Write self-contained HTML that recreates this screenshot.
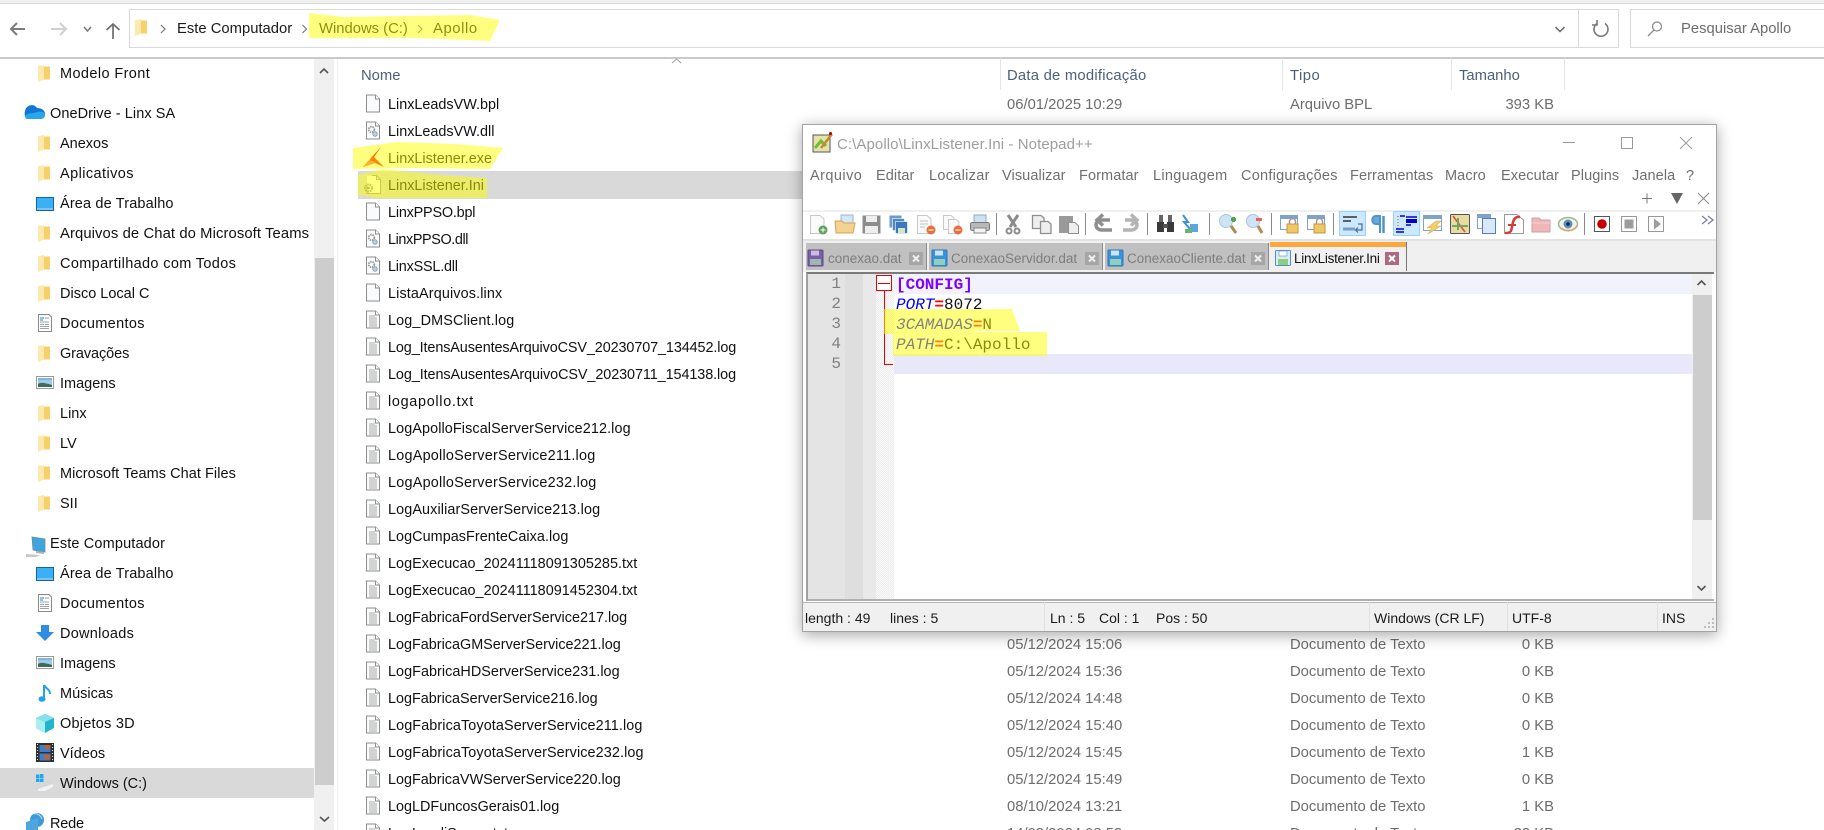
<!DOCTYPE html>
<html lang="pt"><head><meta charset="utf-8"><title>Apollo</title>
<style>
html,body{margin:0;padding:0;background:#fff;width:1824px;height:830px;overflow:hidden}
body{position:relative;font-family:"Liberation Sans",sans-serif;color:#111}
div,span{position:absolute;white-space:pre;box-sizing:border-box}
svg{position:absolute;left:0;top:0;overflow:visible}
#root{left:0;top:0;width:1824px;height:830px;overflow:hidden}
.t{line-height:20px;height:20px}
.s{left:60px;font-size:14.5px;line-height:20px}
.s2{left:50px;font-size:14.5px;line-height:20px}
.f{left:388px;font-size:14.4px;line-height:20px}
.d{left:1007px;font-size:14.8px;line-height:20px;color:#6d6d6d}
.y{left:1290px;font-size:14.8px;line-height:20px;color:#6d6d6d}
.z{right:270px;font-size:14.8px;line-height:20px;color:#6d6d6d}
.h{top:66px;font-size:14.8px;line-height:20px;color:#4c607a}
.a{top:19px;font-size:14.8px;line-height:20px;color:#1a1a1a}
.m{top:166px;font-size:14.5px;line-height:20px;color:#6f6f6f;letter-spacing:.1px}
.tb{top:243px;height:27px;background:#c0c0c0;border-right:1px solid #8c8c8c}
.tt{top:249px;font-size:13.5px;line-height:20px;color:#7d7d7d}
.c{left:896px;font:16px/20px "Liberation Mono",monospace}
.n{left:808px;width:33px;text-align:right;font:16px/20px "Liberation Mono",monospace;color:#808080}
.st{top:608px;font-size:14px;line-height:20px;color:#1a1a1a}
.v{top:602px;width:1px;height:29px;background:#e0e0e0}
.hl{left:0;top:0;width:1824px;height:830px}
</style></head><body>
<div id="root">

<div style="left:0;top:0;width:1824px;height:3px;background:#f0f0f0"></div>
<div style="left:0;top:3px;width:1824px;height:1px;background:#dadada"></div>
<div style="left:129px;top:9px;width:1490px;height:39px;border:1px solid #d9d9d9"></div>
<div style="left:1578px;top:9px;width:1px;height:39px;background:#d9d9d9"></div>
<div style="left:1630px;top:9px;width:194px;height:39px;border:1px solid #d9d9d9;border-right:0"></div>
<div style="left:0;top:57px;width:1824px;height:2px;background:#c9c9c9"></div>

<div class="a" style="left:177px">Este Computador</div>
<div class="a" style="left:319px">Windows (C:)</div>
<div class="a" style="left:433px;letter-spacing:.6px">Apollo</div>
<div class="a" style="left:1681px;color:#6d6d6d">Pesquisar Apollo</div>

<div style="left:314px;top:59px;width:20px;height:771px;background:#f0f0f0"></div>
<div style="left:315px;top:258px;width:19px;height:527px;background:#cdcdcd"></div>
<div style="left:337px;top:59px;width:1px;height:771px;background:#f2f2f2"></div>
<div style="left:0;top:768px;width:314px;height:30px;background:#d9d9d9"></div>
<div style="left:358px;top:171px;width:450px;height:28px;background:#d9d9d9"></div>

<div class="h" style="left:361px">Nome</div>
<div class="h" style="left:1007px;letter-spacing:.24px">Data de modificação</div>
<div class="h" style="left:1290px;letter-spacing:.5px">Tipo</div>
<div class="h" style="left:1459px">Tamanho</div>
<div style="left:1000px;top:58px;width:1px;height:32px;background:#e5e5e5"></div>
<div style="left:1282px;top:58px;width:1px;height:32px;background:#e5e5e5"></div>
<div style="left:1451px;top:58px;width:1px;height:32px;background:#e5e5e5"></div>
<div style="left:1564px;top:58px;width:1px;height:32px;background:#e5e5e5"></div>

<div class="s" style="top:64px;letter-spacing:.39px">Modelo Front</div>
<div class="s2" style="top:104px;letter-spacing:.06px">OneDrive - Linx SA</div>
<div class="s" style="top:134px">Anexos</div>
<div class="s" style="top:164px;letter-spacing:.42px">Aplicativos</div>
<div class="s" style="top:194px;letter-spacing:.15px">Área de Trabalho</div>
<div class="s" style="top:224px;font-size:14.8px;letter-spacing:.1px">Arquivos de Chat do Microsoft Teams</div>
<div class="s" style="top:254px;letter-spacing:.35px">Compartilhado com Todos</div>
<div class="s" style="top:284px">Disco Local C</div>
<div class="s" style="top:314px;letter-spacing:.35px">Documentos</div>
<div class="s" style="top:344px;letter-spacing:-.1px">Gravações</div>
<div class="s" style="top:374px">Imagens</div>
<div class="s" style="top:404px">Linx</div>
<div class="s" style="top:434px">LV</div>
<div class="s" style="top:464px;letter-spacing:.05px">Microsoft Teams Chat Files</div>
<div class="s" style="top:494px">SII</div>
<div class="s2" style="top:534px;letter-spacing:.15px">Este Computador</div>
<div class="s" style="top:564px;letter-spacing:.15px">Área de Trabalho</div>
<div class="s" style="top:594px;letter-spacing:.35px">Documentos</div>
<div class="s" style="top:624px;letter-spacing:.26px">Downloads</div>
<div class="s" style="top:654px">Imagens</div>
<div class="s" style="top:684px">Músicas</div>
<div class="s" style="top:714px;letter-spacing:.23px">Objetos 3D</div>
<div class="s" style="top:744px">Vídeos</div>
<div class="s" style="top:774px">Windows (C:)</div>
<div class="s2" style="top:814px;letter-spacing:-.2px">Rede</div>

<div class="f" style="top:95px">LinxLeadsVW.bpl</div>
<div class="f" style="top:122px">LinxLeadsVW.dll</div>
<div class="f" style="top:149px">LinxListener.exe</div>
<div class="f" style="top:176px">LinxListener.Ini</div>
<div class="f" style="top:203px;letter-spacing:-.19px">LinxPPSO.bpl</div>
<div class="f" style="top:230px;letter-spacing:-.39px">LinxPPSO.dll</div>
<div class="f" style="top:257px;letter-spacing:-.2px">LinxSSL.dll</div>
<div class="f" style="top:284px;letter-spacing:.13px">ListaArquivos.linx</div>
<div class="f" style="top:311px;letter-spacing:.14px">Log_DMSClient.log</div>
<div class="f" style="top:338px;letter-spacing:-.1px">Log_ItensAusentesArquivoCSV_20230707_134452.log</div>
<div class="f" style="top:365px;letter-spacing:-.08px">Log_ItensAusentesArquivoCSV_20230711_154138.log</div>
<div class="f" style="top:392px;letter-spacing:.7px">logapollo.txt</div>
<div class="f" style="top:419px;letter-spacing:.1px">LogApolloFiscalServerService212.log</div>
<div class="f" style="top:446px;letter-spacing:.24px">LogApolloServerService211.log</div>
<div class="f" style="top:473px;letter-spacing:.24px">LogApolloServerService232.log</div>
<div class="f" style="top:500px;letter-spacing:.11px">LogAuxiliarServerService213.log</div>
<div class="f" style="top:527px;letter-spacing:.05px">LogCumpasFrenteCaixa.log</div>
<div class="f" style="top:554px;letter-spacing:.03px">LogExecucao_20241118091305285.txt</div>
<div class="f" style="top:581px;letter-spacing:.03px">LogExecucao_20241118091452304.txt</div>
<div class="f" style="top:608px">LogFabricaFordServerService217.log</div>
<div class="f" style="top:635px">LogFabricaGMServerService221.log</div>
<div class="f" style="top:662px;letter-spacing:.04px">LogFabricaHDServerService231.log</div>
<div class="f" style="top:689px">LogFabricaServerService216.log</div>
<div class="f" style="top:716px;letter-spacing:.1px">LogFabricaToyotaServerService211.log</div>
<div class="f" style="top:743px;letter-spacing:.1px">LogFabricaToyotaServerService232.log</div>
<div class="f" style="top:770px">LogFabricaVWServerService220.log</div>
<div class="f" style="top:797px">LogLDFuncosGerais01.log</div>
<div class="f" style="top:824px">LogLoadiServer.txt</div>

<div class="d" style="top:95px">06/01/2025 10:29</div><div class="y" style="top:95px">Arquivo BPL</div><div class="z" style="top:95px">393 KB</div>
<div class="d" style="top:635px">05/12/2024 15:06</div><div class="y" style="top:635px">Documento de Texto</div><div class="z" style="top:635px">0 KB</div>
<div class="d" style="top:662px">05/12/2024 15:36</div><div class="y" style="top:662px">Documento de Texto</div><div class="z" style="top:662px">0 KB</div>
<div class="d" style="top:689px">05/12/2024 14:48</div><div class="y" style="top:689px">Documento de Texto</div><div class="z" style="top:689px">0 KB</div>
<div class="d" style="top:716px">05/12/2024 15:40</div><div class="y" style="top:716px">Documento de Texto</div><div class="z" style="top:716px">0 KB</div>
<div class="d" style="top:743px">05/12/2024 15:45</div><div class="y" style="top:743px">Documento de Texto</div><div class="z" style="top:743px">1 KB</div>
<div class="d" style="top:770px">05/12/2024 15:49</div><div class="y" style="top:770px">Documento de Texto</div><div class="z" style="top:770px">0 KB</div>
<div class="d" style="top:797px">08/10/2024 13:21</div><div class="y" style="top:797px">Documento de Texto</div><div class="z" style="top:797px">1 KB</div>
<div class="d" style="top:824px">14/03/2024 08:53</div><div class="y" style="top:824px">Documento de Texto</div><div class="z" style="top:824px">33 KB</div>

<svg width="1824" height="830">
<defs>
<g id="fo"><path d="M0 1L6 0V14.500L0 17Z" fill="#fce9ad"/><path d="M6 1.500H12V14.500H6Z" fill="#f6d16a"/></g>
<g id="b"><path d="M.5.5H9.500L13.500 4.500V17.500H.5Z" fill="#fafbfc" stroke="#8e8e8e"/><path d="M9.500.5V4.500H13.500" fill="#fff" stroke="#8e8e8e"/></g>
<g id="l"><use href="#b"/><path d="M3 5.500H9M3 7.500H11M3 9.500H11M3 11.500H11M3 13.500H11M3 15.500H11" stroke="#a8a8a8" fill="none"/></g>
<g id="g"><use href="#b"/><circle cx="5.500" cy="8" r="2.800" fill="none" stroke="#9a9a9a" stroke-width="1.800" stroke-dasharray="1.500 .8"/><circle cx="9" cy="12.500" r="2.200" fill="#b9d4ea" stroke="#8aa0b5"/></g>
<g id="dk"><rect x=".5" y=".5" width="17" height="13" fill="#1d9bf0" stroke="#12669f"/><rect x="1" y="1" width="16" height="10" fill="#3ab0f7"/><path d="M1 12H17" stroke="#d8eefc"/></g>
<g id="dc"><path d="M.5.5H11L13.500 3V17.500H.5Z" fill="#fff" stroke="#8a8a8a"/><path d="M2 4H6M2 6H5" stroke="#2a86d8"/><path d="M7 4H11M2 8H11M7 10.500H11M2 10.500H6M2 12.500H11M2 14.500H11" stroke="#9aa3ab"/></g>
<g id="im"><rect x=".5" y=".5" width="17" height="12" fill="#fff" stroke="#9a9a9a"/><rect x="2" y="2" width="14" height="9" fill="#9fcbea"/><path d="M2 8C5 6 9 7 16 9V11H2Z" fill="#3f6a58"/><path d="M2 3H16" stroke="#5d9fd2"/></g>
<g id="bk"><path d="M1 7.500H15M7 1.500L1 7.500L7 13.500" fill="none" stroke="currentColor" stroke-width="2"/></g>
</defs>

<!-- nav -->
<g color="#7b7b7b"><use href="#bk" x="10" y="21.500"/></g>
<path d="M66 29H51M60 23L66 29L60 35" fill="none" stroke="#d0d0d0" stroke-width="2"/>
<path d="M84 27L87.500 31L91 27" fill="none" stroke="#777" stroke-width="1.500"/>
<path d="M113 39V24M106.500 30L113 24L119.500 30" fill="none" stroke="#6e6e6e" stroke-width="1.700"/>
<use href="#fo" x="135" y="19"/>
<path d="M161 25L165 29L161 33M302.500 25L306.500 29L302.500 33M418 25L422 29L418 33" fill="none" stroke="#7a7a7a" stroke-width="1.200"/>
<path d="M1555.500 27L1560 31.500L1564.500 27" fill="none" stroke="#666" stroke-width="1.500"/>
<path d="M1605 23.500A7 7 0 1 1 1597 23.500M1597 20V25H1592" fill="none" stroke="#777" stroke-width="1.600"/>
<circle cx="1657" cy="26.500" r="4.500" fill="none" stroke="#888" stroke-width="1.200"/><path d="M1654 30L1648 36" stroke="#888" stroke-width="1.300"/>
<path d="M672 63L676.500 59L681 63" fill="none" stroke="#a0a0a0"/>
<path d="M320 73L324 69L328 73" fill="none" stroke="#555" stroke-width="1.600"/>
<path d="M320 817L324.500 821L329 817" fill="none" stroke="#555" stroke-width="1.600"/>

<!-- sidebar icons -->
<use href="#fo" x="38" y="65"/><use href="#fo" x="38" y="135"/><use href="#fo" x="38" y="165"/>
<use href="#dk" x="36" y="197"/><use href="#fo" x="38" y="225"/><use href="#fo" x="38" y="255"/><use href="#fo" x="38" y="285"/>
<use href="#dc" x="38" y="314"/><use href="#fo" x="38" y="345"/><use href="#im" x="36" y="376"/><use href="#fo" x="38" y="405"/>
<use href="#fo" x="38" y="435"/><use href="#fo" x="38" y="465"/><use href="#fo" x="38" y="495"/>
<use href="#dk" x="36" y="567"/><use href="#dc" x="38" y="594"/><use href="#im" x="36" y="656"/>
<path d="M25 111C26 105 34 103 37 108C41 108 45 110 45 114C45 117 43 119 40 119H28C25 119 24 114 25 111Z" fill="#0f78d4"/><path d="M25 116C29 112 33 114 37 112C41 111 45 112 45 115C45 118 43 119 40 119H28C26 119 25 118 25 116Z" fill="#28a8ea"/>
<path d="M32 537L45 539V552L33 550Z" fill="#3da5df" stroke="#75899a" stroke-width=".8"/><path d="M26 554L40 555L36 557H26Z" fill="#c6c9cc"/><path d="M36 551L44 552V554L36 553Z" fill="#a9b3bb"/>
<path d="M41 625H49V632H54L45 641L36 632H41Z" fill="#2d8de0"/>
<path d="M44 685L44 699" stroke="#1fa3ee" stroke-width="2"/><ellipse cx="42" cy="699" rx="3.500" ry="2.800" fill="#1fa3ee"/><path d="M44 685C46 689 50 689 50 694" fill="none" stroke="#1fa3ee" stroke-width="2"/>
<path d="M45 714L54 718V728L45 733L36 728V718Z" fill="#1fb6cc"/><path d="M36 718L45 722L54 718L45 714Z" fill="#86e1ea"/><path d="M36 718L45 722V733L36 728Z" fill="#a9eef2"/>
<rect x="36" y="743" width="18" height="19" fill="#2f2f2f"/><rect x="39.500" y="745" width="11" height="7" fill="#3f7fc8"/><rect x="39.500" y="753.500" width="11" height="7" fill="#3f7fc8"/><path d="M45 745h5v4h-5zM44 755h6v4h-6z" fill="#c75f2a"/><path d="M37.500 744v18M52.500 744v18" stroke="#ddd" stroke-dasharray="1 2"/>
<path d="M36 781H53V787L45 791H39L36 789Z" fill="#d4d8da"/><path d="M38 789L53 784V787L45 791H38Z" fill="#f0f2f3"/><path d="M36 778h3.500v-3.500h-3.500zM40 778h3.500v-4h-3.500zM36 782h3.500v-3.500h-3.500zM40 782h3.500v-3.500h-3.500z" fill="#1fa7ee"/>
<circle cx="37" cy="820" r="7" fill="#3f9bd7"/><path d="M26 822L38 818V830H26Z" fill="#4ea6de"/><path d="M34 814C38 813 41 816 42 819" stroke="#bfe0f5" fill="none"/>

<!-- file icons -->
<use href="#b" x="366" y="94.500"/><use href="#g" x="366" y="121.500"/>
<path d="M371.500 175.500H376.500L380.500 179.500V193.500H367V186" fill="#fafbfc" stroke="#999"/><path d="M376.500 175.500V179.500H380.500" fill="none" stroke="#999"/><path d="M367 175.500H372V186H367Z" fill="#fafbfc" stroke="#999" stroke-width="0"/><circle cx="368.500" cy="188" r="3.500" fill="none" stroke="#8a8a8a" stroke-width="2" stroke-dasharray="1.500 1"/><circle cx="368.500" cy="188" r="1.200" fill="#777"/>
<use href="#b" x="366" y="202.500"/><use href="#g" x="366" y="229.500"/><use href="#g" x="366" y="256.500"/><use href="#b" x="366" y="283.500"/>
<use href="#l" x="366" y="310.500"/><use href="#l" x="366" y="337.500"/><use href="#l" x="366" y="364.500"/><use href="#l" x="366" y="391.500"/><use href="#l" x="366" y="418.500"/>
<use href="#l" x="366" y="445.500"/><use href="#l" x="366" y="472.500"/><use href="#l" x="366" y="499.500"/><use href="#l" x="366" y="526.500"/><use href="#l" x="366" y="553.500"/>
<use href="#l" x="366" y="580.500"/><use href="#l" x="366" y="607.500"/><use href="#l" x="366" y="634.500"/><use href="#l" x="366" y="661.500"/><use href="#l" x="366" y="688.500"/>
<use href="#l" x="366" y="715.500"/><use href="#l" x="366" y="742.500"/><use href="#l" x="366" y="769.500"/><use href="#l" x="366" y="796.500"/><use href="#l" x="366" y="823.500"/>
</svg>

<!-- explorer highlights -->
<svg class="hl" width="1824" height="830" style="z-index:1">
<path d="M309 13L345 17L470 15L500 20L490 41L420 38L309 38Z" fill="rgba(255,255,0,.5)"/>
<path d="M353 148L397 142L455 144L503 148L490 169L410 168L353 169Z" fill="rgba(255,255,0,.5)"/>
<path d="M358 175L383 169L440 175L487 178V198H400L376 198L358 195Z" fill="rgba(255,255,0,.5)"/>
<path d="M381 147L374 157L384 167L375 163L363 167L371 158Z" fill="#f68a0c"/>
<path d="M381 147L374 157L371 158Z" fill="#fb6a00"/>
<path d="M370 160L384 167L375 163L363 167Z" fill="#fdb22e"/>
</svg>

<!-- NOTEPAD++ -->
<div style="left:802px;top:124px;width:915px;height:508px;background:#fff;border:1px solid #a3a3a3;box-shadow:0 3px 14px rgba(0,0,0,.35);z-index:2"></div>
<div style="left:0;top:0;width:1824px;height:830px;z-index:3">
<div style="left:803px;top:210px;width:913px;height:2px;background:#f0f0f0"></div>
<div style="left:803px;top:239px;width:913px;height:2px;background:#e2e2e2"></div>
<div style="left:803px;top:241px;width:913px;height:31px;background:#f0f0f0"></div>

<div class="t" style="left:837px;top:135px;font-size:15px;color:#9d9d9d;letter-spacing:.08px">C:\Apollo\LinxListener.Ini - Notepad++</div>
<div class="m" style="left:810px;letter-spacing:.45px">Arquivo</div><div class="m" style="left:876px">Editar</div><div class="m" style="left:929px;letter-spacing:.3px">Localizar</div>
<div class="m" style="left:1002px">Visualizar</div><div class="m" style="left:1079px">Formatar</div><div class="m" style="left:1153px;letter-spacing:.3px">Linguagem</div>
<div class="m" style="left:1241px;letter-spacing:.25px">Configurações</div><div class="m" style="left:1350px">Ferramentas</div><div class="m" style="left:1445px">Macro</div>
<div class="m" style="left:1501px">Executar</div><div class="m" style="left:1571px">Plugins</div><div class="m" style="left:1632px">Janela</div><div class="m" style="left:1686px">?</div>

<div style="left:806px;top:243px;width:121px;height:27px;background:#c0c0c0;border-right:1px solid #8c8c8c"></div>
<div class="tb" style="left:929px;width:174px"></div>
<div class="tb" style="left:1105px;width:164px"></div>
<div style="left:1270px;top:242px;width:137px;height:29px;background:#f0f0f0;border-right:1px solid #777"></div>
<div style="left:1270px;top:242px;width:136px;height:5px;background:#fca83c"></div>
<div class="tt" style="left:828px">conexao.dat</div>
<div class="tt" style="left:951px">ConexaoServidor.dat</div>
<div class="tt" style="left:1127px">ConexaoCliente.dat</div>
<div class="tt" style="left:1294px;color:#111;letter-spacing:-.28px">LinxListener.Ini</div>

<div style="left:806px;top:272px;width:908px;height:329px;background:#fff;border-top:2px solid #7a7a7a;border-left:2px solid #a0a0a0;border-bottom:2px solid #b0b0b0"></div>
<div style="left:808px;top:274px;width:37px;height:325px;background:#e4e4e4"></div>
<div style="left:845px;top:274px;width:18px;height:325px;background:#dedede"></div>
<div style="left:863px;top:274px;width:13px;height:325px;background:#e9e9e9"></div>
<div style="left:876px;top:274px;width:18px;height:325px;background:repeating-conic-gradient(#ececec 0 25%,#fbfbfb 0 50%) 0 0/2px 2px"></div>
<div style="left:894px;top:274px;width:798px;height:20px;background:#f0f3fb"></div>
<div style="left:894px;top:354px;width:798px;height:20px;background:#e8e8fa"></div>
<div style="left:1692px;top:274px;width:20px;height:325px;background:#f0f0f0"></div>
<div style="left:1693px;top:295px;width:19px;height:225px;background:#cdcdcd"></div>

<div class="n" style="top:274px">1</div><div class="n" style="top:294px">2</div><div class="n" style="top:314px">3</div><div class="n" style="top:334px">4</div><div class="n" style="top:354px">5</div>
<div class="c" style="top:275px;color:#8000ff;font-weight:bold">[CONFIG]</div>
<div class="c" style="top:295px"><i style="color:#0000ff">PORT</i><b style="color:#f00">=</b>8072</div>
<div class="c" style="top:315px"><i style="color:#0000ff">3CAMADAS</i><b style="color:#f00">=</b>N</div>
<div class="c" style="top:335px"><i style="color:#0000ff">PATH</i><b style="color:#f00">=</b>C:\Apollo</div>

<div style="left:803px;top:602px;width:913px;height:29px;background:#f0f0f0;border-top:1px solid #b5b5b5"></div>
<div class="v" style="left:1044px"></div><div class="v" style="left:1369px"></div><div class="v" style="left:1507px"></div><div class="v" style="left:1657px"></div>
<div class="st" style="left:805px">length : 49</div><div class="st" style="left:890px">lines : 5</div>
<div class="st" style="left:1050px">Ln : 5</div><div class="st" style="left:1099px">Col : 1</div><div class="st" style="left:1156px">Pos : 50</div>
<div class="st" style="left:1374px">Windows (CR LF)</div><div class="st" style="left:1512px">UTF-8</div><div class="st" style="left:1662px">INS</div>

<svg width="1824" height="830">
<!-- title icon -->
<rect x="813" y="135" width="17" height="17" fill="#e6e2b0" stroke="#555"/><path d="M815 148L821 141L826 146" fill="none" stroke="#6fbf2f" stroke-width="3"/><path d="M821 148L832 134" stroke="#c8862a" stroke-width="2.500"/><circle cx="830.500" cy="133.500" r="1.500" fill="#a00"/>
<!-- window controls -->
<path d="M1563 142.500H1575" stroke="#9a9a9a"/><rect x="1621.500" y="137.500" width="11" height="11" fill="none" stroke="#9a9a9a"/><path d="M1680 137L1692 149M1692 137L1680 149" stroke="#9a9a9a"/>
<path d="M1642 198.500H1652M1647 193.500V203.500" stroke="#777"/><path d="M1671 193H1683L1677 204Z" fill="#666"/><path d="M1698 193L1709 204M1709 193L1698 204" stroke="#888"/>
<path d="M1702 216L1707 220L1702 224M1708 216L1713 220L1708 224" fill="none" stroke="#7b7bb0" stroke-width="1.300"/>
<!-- toolbar -->
<path d="M996.500 213V235M1085.500 213V235M1147.500 213V235M1209.500 213V235M1271.500 213V235M1333.500 213V235M1584.500 213V235" stroke="#8a8a8a"/>
<path d="M810.500 215.500H820L824 219V233.500H810.500Z" fill="#fafafa" stroke="#c8c8c8"/><circle cx="823" cy="230" r="4.500" fill="#5f9f5f"/><path d="M823 227.500V232.500M820.500 230H825.500" stroke="#fff"/>
<path d="M841 215H853V227H841Z" fill="#d7e6f7" stroke="#9ab7d8"/><path d="M835 221H842L844 223H855L853 233H836Z" fill="#f4d28f" stroke="#d1a35a"/>
<rect x="862.500" y="215.500" width="18" height="18" fill="#8c8c8c"/><rect x="866" y="216" width="11" height="6" fill="#eee"/><rect x="865" y="226" width="13" height="7" fill="#eee"/>
<rect x="889.500" y="215.500" width="12" height="12" fill="#6e9bc8"/><rect x="892.500" y="218.500" width="12" height="12" fill="#4f87c1" stroke="#fff" stroke-width=".6"/><rect x="895.500" y="221.500" width="12" height="12" fill="#3c79bc" stroke="#fff" stroke-width=".6"/><rect x="898" y="228" width="7" height="5" fill="#d2e8c0"/>
<path d="M917.500 215.500H927L931 219V233.500H917.500Z" fill="#fafafa" stroke="#c8c8c8"/><path d="M920 221H928M920 224H928M920 227H925" stroke="#c2c2c2"/><circle cx="931" cy="230" r="4.500" fill="#e4713d"/><path d="M928.500 230H933.500" stroke="#fff"/>
<path d="M943.500 215.500H951L954 218V229.500H943.500Z" fill="#fafafa" stroke="#c8c8c8"/><path d="M948.500 219.500H956L959 222V233.500H948.500Z" fill="#fafafa" stroke="#c8c8c8"/><circle cx="958" cy="230" r="4.500" fill="#e4713d"/><path d="M955.500 230H960.500" stroke="#fff"/>
<rect x="974" y="215" width="12" height="8" fill="#cfe0f2" stroke="#8fa8c4"/><rect x="970.500" y="222.500" width="19" height="8" rx="2" fill="#b8b8b8" stroke="#777"/><rect x="974" y="228" width="12" height="5" fill="#f2f2f2" stroke="#888"/>
<path d="M1018 215L1010 227M1008 215L1016 227" stroke="#8c8c8c" stroke-width="3"/><circle cx="1009" cy="231" r="2.500" fill="none" stroke="#8c8c8c" stroke-width="2"/><circle cx="1017" cy="231" r="2.500" fill="none" stroke="#8c8c8c" stroke-width="2"/>
<path d="M1032.500 215.500H1041L1044 218V228.500H1032.500Z" fill="#eee" stroke="#8e8e8e" stroke-width="1.300"/><path d="M1040.500 221.500H1048L1051 224V233.500H1040.500Z" fill="#eee" stroke="#8e8e8e" stroke-width="1.300"/>
<path d="M1059 216H1073V233H1059Z" fill="#9a9a9a"/><path d="M1068.500 222.500H1075L1078.500 226V233.500H1068.500Z" fill="#eee" stroke="#8e8e8e"/>
<path d="M1112 230H1102C1094 230 1094 220 1102 220H1110M1103 214.500L1097 220L1103 225.500" fill="none" stroke="#8f8f8f" stroke-width="3.500"/>
<path d="M1123 230H1131C1139 230 1139 220 1131 220H1125M1131 214.500L1137 220L1131 225.500" fill="none" stroke="#b3b3b3" stroke-width="3.500"/>
<rect x="1157" y="222" width="7" height="10" fill="#3a3a3a"/><rect x="1167" y="222" width="7" height="10" fill="#3a3a3a"/><rect x="1163" y="224" width="5" height="4" fill="#555"/><rect x="1159" y="215" width="4" height="7" fill="#666"/><rect x="1168" y="215" width="4" height="7" fill="#666"/>
<path d="M1183 215L1188 222H1184L1190 229" fill="none" stroke="#3e8fd6" stroke-width="2"/><path d="M1190 224L1198 224L1198 232H1190Z" fill="#5da6e3"/><path d="M1185 229H1192V233H1185Z" fill="#6bb56b"/>
<circle cx="1226" cy="221" r="6.500" fill="#cfe3f5" stroke="#a9c6df"/><path d="M1231 226L1236 233" stroke="#b08a50" stroke-width="3"/><path d="M1231 219.500H1236M1233.500 217V222" stroke="#4fa34f" stroke-width="3"/>
<circle cx="1253" cy="221" r="6.500" fill="#cfe3f5" stroke="#a9c6df"/><path d="M1258 226L1262 233" stroke="#b08a50" stroke-width="3"/><path d="M1256 219.500H1262" stroke="#e46262" stroke-width="3"/>
<rect x="1280.500" y="215.500" width="17" height="14" fill="#fff" stroke="#7fa4cc"/><rect x="1281" y="216" width="16" height="3" fill="#7fa4cc"/><rect x="1287" y="224" width="11" height="9" fill="#f0c766" stroke="#c8963a"/><path d="M1289.500 224V221.500A3 3 0 0 1 1295.500 221.500V224" fill="none" stroke="#999" stroke-width="1.500"/>
<rect x="1307.500" y="215.500" width="17" height="14" fill="#fff" stroke="#7fa4cc"/><rect x="1308" y="216" width="16" height="3" fill="#7fa4cc"/><rect x="1314" y="224" width="11" height="9" fill="#f0c766" stroke="#c8963a"/><path d="M1316.500 224V221.500A3 3 0 0 1 1322.500 221.500V224" fill="none" stroke="#999" stroke-width="1.500"/>
<rect x="1339.500" y="211.500" width="26" height="24" fill="#cce8ff" stroke="#99d1ff"/><path d="M1343 217H1357M1343 221H1351" stroke="#333" stroke-width="1.500"/><path d="M1343 229H1355" stroke="#7a9cc6" stroke-width="3"/><path d="M1358 224H1362V230H1356M1358 227.500L1355.500 230L1358 232.500" fill="none" stroke="#4a6d9a" stroke-width="1.200"/>
<path d="M1380 233V216H1376C1371 216 1371 224 1376 224H1380" fill="#6ea8d8" stroke="#4f93cf" stroke-width="2"/><path d="M1383.500 233V216" stroke="#4f93cf" stroke-width="2.500"/>
<rect x="1393.500" y="211.500" width="26" height="24" fill="#cce8ff" stroke="#99d1ff"/><path d="M1398 216V234" stroke="#d33" stroke-dasharray="1 2"/><path d="M1400 216H1405M1406 217H1417M1406 221H1417M1406 225H1411M1396 229H1404M1396 232H1404" stroke="#0000d0" stroke-width="1.600"/><path d="M1406 219H1417V223H1406Z" fill="#0000d0"/>
<rect x="1423.500" y="215.500" width="18" height="15" fill="#fff" stroke="#7fa4cc"/><rect x="1424" y="216" width="17" height="3" fill="#7fa4cc"/><path d="M1436 221L1427 228H1432L1428 234L1441 226H1436L1441 221Z" fill="#f2ce6b" stroke="#c8a040" stroke-width=".5"/>
<rect x="1450.500" y="214.500" width="19" height="19" rx="1" fill="#e9dca0" stroke="#555"/><path d="M1453 216L1465 232" stroke="#d8503a" stroke-width="1.500"/><path d="M1458 218V230M1452 226H1468" stroke="#6fa863" stroke-width="2"/>
<rect x="1477.500" y="214.500" width="13" height="14" fill="#fff" stroke="#7fa4cc"/><rect x="1478" y="215" width="12" height="3" fill="#7fa4cc"/><rect x="1482.500" y="218.500" width="13" height="15" fill="#dbe8f7" stroke="#4f7fc0"/>
<path d="M1504.500 214.500H1517L1523.500 220V233.500H1504.500Z" fill="#fff" stroke="#999"/><path d="M1520 217C1512 216 1513 225 1511 231C1510 233 1507 233 1505 233" fill="none" stroke="#d43c3c" stroke-width="2.500"/><path d="M1508 225H1516" stroke="#d43c3c" stroke-width="2"/>
<path d="M1532 218H1539L1541 220H1550V232H1532Z" fill="#eeb6b8" stroke="#d69ca0"/><path d="M1532 223H1550" stroke="#f5d3d3"/>
<ellipse cx="1568" cy="224" rx="9.500" ry="6.500" fill="#f4f2e8" stroke="#9db69b" stroke-width="1.500"/><circle cx="1568" cy="224" r="4.500" fill="#5b8fc0"/><circle cx="1568" cy="224" r="1.800" fill="#223"/><path d="M1561 228C1566 232 1572 232 1577 226" fill="none" stroke="#dca25a" stroke-width="1.300"/>
<rect x="1594.500" y="216.500" width="15" height="15" fill="#fff" stroke="#555"/><circle cx="1602" cy="224" r="4.800" fill="#c40000"/>
<rect x="1621.500" y="216.500" width="15" height="15" fill="#fff" stroke="#999"/><rect x="1624.500" y="219.500" width="9" height="9" fill="#9c9c9c"/>
<rect x="1648.500" y="216.500" width="15" height="15" fill="#fff" stroke="#999"/><path d="M1654 218.500L1661 224L1654 229.500Z" fill="#9c9c9c"/>
<!-- tab icons + close -->
<rect x="808" y="250" width="15" height="16" rx="1" fill="#7a5ea8" stroke="#5d4786"/><rect x="811" y="250.500" width="8" height="5" fill="#cbbce0"/><rect x="810" y="259" width="11" height="6" fill="#9fb7b0"/>
<rect x="932" y="250" width="15" height="16" rx="1" fill="#3a92dc" stroke="#2d77b8"/><rect x="935" y="250.500" width="8" height="5" fill="#cde4f6"/><rect x="934" y="259" width="11" height="6" fill="#8fd0b8"/>
<rect x="1108" y="250" width="15" height="16" rx="1" fill="#3a92dc" stroke="#2d77b8"/><rect x="1111" y="250.500" width="8" height="5" fill="#cde4f6"/><rect x="1110" y="259" width="11" height="6" fill="#8fd0b8"/>
<rect x="1275.500" y="250.500" width="15" height="15" rx="1" fill="#dcebf9" stroke="#4f8fcf"/><rect x="1279" y="251" width="8" height="5" fill="#fff" stroke="#4f8fcf" stroke-width=".6"/><rect x="1278" y="259" width="10" height="6" fill="#8fcf7a"/>
<g><rect x="909" y="252" width="14" height="13" fill="#a6a6a6"/><path d="M913 255.500L919 261.500M919 255.500L913 261.500" stroke="#eee" stroke-width="2"/>
<rect x="1085" y="252" width="14" height="13" fill="#a6a6a6"/><path d="M1089 255.500L1095 261.500M1095 255.500L1089 261.500" stroke="#eee" stroke-width="2"/>
<rect x="1251" y="252" width="14" height="13" fill="#a6a6a6"/><path d="M1255 255.500L1261 261.500M1261 255.500L1255 261.500" stroke="#eee" stroke-width="2"/>
<rect x="1385" y="252" width="14" height="13" fill="#ab6a80"/><path d="M1389 255.500L1395 261.500M1395 255.500L1389 261.500" stroke="#fff" stroke-width="2"/></g>
<!-- fold markers -->
<rect x="876.500" y="275.500" width="15" height="15" fill="#fff" stroke="#e00"/><path d="M878 283.500H890" stroke="#e00"/><path d="M884.500 291V364.500H893" fill="none" stroke="#e00"/>
<!-- editor scroll arrows -->
<path d="M1697.500 285L1701.500 281L1705.500 285M1697.500 586L1701.500 590L1705.500 586" fill="none" stroke="#555" stroke-width="1.600"/>
<!-- grip -->
<path d="M1712 622h2v2h-2zM1712 626h2v2h-2zM1708 626h2v2h-2zM1712 618h2v2h-2zM1708 622h2v2h-2zM1704 626h2v2h-2z" fill="#bdbdbd"/>
<!-- npp highlights -->
<path d="M884 309H1012L1020 331H975L975 334H884Z" fill="rgba(255,255,0,.5)"/>
<path d="M893 334H975V332H1047V356H893Z" fill="rgba(255,255,0,.5)"/>
</svg>
</div>
</div>
</body></html>
